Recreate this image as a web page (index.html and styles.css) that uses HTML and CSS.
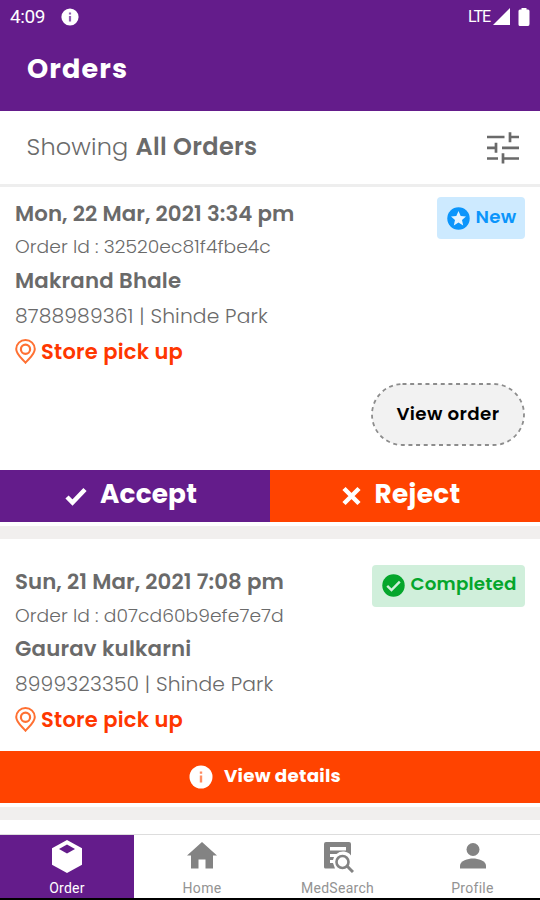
FILE: index.html
```html
<!DOCTYPE html>
<html lang="en">
<head>
<meta charset="utf-8">
<title>Orders</title>
<link rel="stylesheet" href="styles.css">
</head>
<body>
<header class="top">
  <div class="status">
    <span class="clock">4:09</span>
    <svg width="18" height="18" viewBox="0 0 18 18"><circle cx="9" cy="9" r="8.600" fill="#fff"/><path d="M9 4.500v2M9 8v5.500" stroke="#8f5fb3" stroke-width="2.200"/></svg>
    <span class="lte">LTE</span>
    <svg width="17" height="17" viewBox="0 0 17 17"><path d="M17 0v17H0z" fill="#fff"/></svg>
    <svg class="battery" width="12" height="18" viewBox="0 0 12 18"><path d="M3.500 0h5v1.500H10q1.500 0 1.500 1.500v13Q11.500 18 10 18H2Q.5 18 .5 16.500V3Q.5 1.500 2 1.500h1.500z" fill="#fff"/></svg>
  </div>
  <h1>Orders</h1>
</header>
<section class="filter">
  <span class="showing">Showing</span>
  <span class="all">All Orders</span>
  <svg class="tune" width="32" height="32" viewBox="0 0 32 32" fill="none" stroke="#6a6a6a" stroke-width="2.700"><path d="M0 5h17.500M23.500 5H32M23 .3v10M0 15.800h9M15 15.800h17M9 10.800v10M0 26.500h11M17 26.500h15M16 21.300v10.200"/></svg>
</section>
<main>
  <article class="card first">
    <div class="info">
      <div class="lines">
        <div class="date">Mon, 22 Mar, 2021 3:34 pm</div>
        <div class="oid">Order Id : 32520ec81f4fbe4c</div>
        <div class="name">Makrand Bhale</div>
        <div class="phone">8788989361 | Shinde Park</div>
        <div class="store"><svg width="21" height="25" viewBox="0 0 21 25" fill="none" stroke="#ff7032" stroke-width="2"><path d="M10.500 23.700C7 19.500 1.200 15.400 1.200 10a9.300 9 0 0 1 18.600 0c0 5.400-5.800 9.500-9.300 13.700z"/><circle cx="10.500" cy="10.300" r="4.600" stroke-width="2.200"/></svg><span>Store pick up</span></div>
      </div>
      <div class="badge new"><svg width="23" height="23" viewBox="0 0 23 23"><circle cx="11.500" cy="11.500" r="11.200" fill="#0b95fb"/><path d="M11.500 4l2.200 5 5.300.5-4 3.600 1.200 5.300-4.700-2.800-4.700 2.800L8 13.100 4 9.500 9.300 9z" fill="#e2f3ff"/></svg><span>New</span></div>
    </div>
    <div class="view-row"><button class="view"><svg class="dash" width="154" height="63" viewBox="0 0 154 63"><rect x="1" y="1" width="152" height="61" rx="30.500" fill="#f2f2f2" stroke="#8d8d8d" stroke-width="1.800" stroke-dasharray="4 3.650"/></svg><span class="view-label">View order</span></button></div>
    <div class="actions">
      <button class="accept"><svg width="22" height="20" viewBox="0 0 22 20"><path d="M2 11l5.500 5.500L20 3.500" fill="none" stroke="#fff" stroke-width="4.500"/></svg><span>Accept</span></button>
      <button class="reject"><svg width="19" height="20" viewBox="0 0 19 20"><path d="M2 2.500l15 15M17 2.500l-15 15" stroke="#fff" stroke-width="4.500"/></svg><span>Reject</span></button>
    </div>
  </article>
  <div class="gap"></div>
  <article class="card second">
    <div class="info">
      <div class="lines">
        <div class="date">Sun, 21 Mar, 2021 7:08 pm</div>
        <div class="oid">Order Id : d07cd60b9efe7e7d</div>
        <div class="name">Gaurav kulkarni</div>
        <div class="phone">8999323350 | Shinde Park</div>
        <div class="store"><svg width="21" height="25" viewBox="0 0 21 25" fill="none" stroke="#ff7032" stroke-width="2"><path d="M10.500 23.700C7 19.500 1.200 15.400 1.200 10a9.300 9 0 0 1 18.600 0c0 5.400-5.800 9.500-9.300 13.700z"/><circle cx="10.500" cy="10.300" r="4.600" stroke-width="2.200"/></svg><span>Store pick up</span></div>
      </div>
      <div class="badge done"><svg width="23" height="23" viewBox="0 0 23 23"><circle cx="11.500" cy="11.500" r="11.200" fill="#05a62c"/><path d="M5.200 11.800l4.300 4.300 8.300-8.500" fill="none" stroke="#d0efdb" stroke-width="2.400"/></svg><span>Completed</span></div>
    </div>
    <button class="details"><svg width="24" height="24" viewBox="0 0 24 24"><circle cx="12" cy="12" r="11.500" fill="#fff"/><path d="M12 6.500v2.300M12 10.500v7" stroke="#ff8d63" stroke-width="2.400"/></svg><span>View details</span></button>
  </article>
  <div class="gap"></div>
</main>
<nav>
  <a class="on"><svg width="30" height="33" viewBox="0 0 30 33"><path d="M15 0l15 8.300v16.400L15 33 0 24.700V8.300z" fill="#fff"/><path d="M15 4.500l8 4.500-8 4.500L7 9z" fill="#641c8b"/></svg><span>Order</span></a>
  <a><svg width="30" height="33" viewBox="0 0 30 33"><path d="M15 2L30 15.500h-4V28.500h-7.500v-9h-7v9H4v-13H0z" fill="#838383"/></svg><span>Home</span></a>
  <a><svg width="32" height="33" viewBox="0 0 32 33"><path fill="#838383" fill-rule="evenodd" d="M4 2h23a2 2 0 0 1 2 2v11.500a10 10 0 0 0-14.500-1.500H8v3h4l-1 3H8v3h3l2 5.500H3.500A1.500 1.500 0 0 1 2 27V4a2 2 0 0 1 2-2zM8 7v3.500h16V7z"/><circle cx="20.500" cy="22" r="6" fill="none" stroke="#838383" stroke-width="2.600"/><path d="M25 26l6 6" stroke="#838383" stroke-width="3"/></svg><span>MedSearch</span></a>
  <a><svg width="26" height="33" viewBox="0 0 26 33" fill="#838383"><circle cx="13" cy="9.500" r="6.500"/><path d="M0 28.500V25.500C0 21 8 18.500 13 18.500s13 2.500 13 7v3z"/></svg><span>Profile</span></a>
</nav>
</body>
</html>
```
FILE: styles.css
```css
*{box-sizing:border-box}
body{margin:0;width:540px;height:900px;overflow:hidden;background:#fff;font-family:Poppins,Inter,sans-serif;color:#6a6a6a;display:flex;flex-direction:column}
svg{display:block;flex:none}
button{border:0;padding:0;margin:0;font:inherit;color:inherit;background:none}
span,.lines div{white-space:nowrap}

.top{height:111px;background:#641c8b;color:#fff;flex:none}
.status{height:33px;display:flex;align-items:center;padding:0 10px;font-family:Roboto,sans-serif}
.clock{font-size:19px;width:51px;letter-spacing:-.41px}
.lte{font-size:16px;margin-left:auto;margin-right:3px;letter-spacing:-1.040px}
.battery{margin-left:8px}
h1{margin:0;padding-left:27px;font-size:27px;font-weight:700;line-height:71px;letter-spacing:1.150px}

.filter{height:76px;flex:none;display:flex;align-items:center;padding:0 21px 0 26.500px;border-bottom:3px solid #eee;font-size:24px;line-height:34px}
.filter>span{padding-bottom:1px}
.showing{font-weight:300;width:109px;letter-spacing:.17px}
.all{font-weight:600;letter-spacing:.34px}
.tune{margin-left:auto}

main{flex:1;min-height:0}
.first{height:334.500px;display:flex;flex-direction:column}
.info{display:flex;justify-content:space-between;align-items:flex-start;padding:9px 15.500px 0 15px}
.lines{display:grid;grid-template-rows:34px 34px 33px 37px 34px;align-items:center;line-height:30px}
.date,.name{font-size:21.300px;font-weight:600;letter-spacing:.08px}
.name{letter-spacing:.18px}
.first .date{padding-top:1px}
.oid{font-size:18.700px;font-weight:300;letter-spacing:.05px}
.phone{font-size:20.300px;font-weight:300;letter-spacing:.13px}
.store{display:flex;align-items:center;gap:5px;color:#ff3700;font-size:21px;font-weight:600;letter-spacing:.24px}
.first .store span{padding-top:1px}

.badge{height:42px;border-radius:4px;display:flex;align-items:center;font-size:18.300px;line-height:28px;font-weight:600;padding-left:10px;gap:6px}
.badge span{padding-bottom:3px}
.new{width:88px;margin-top:1px;background:#cdeaff;color:#0b95fb;letter-spacing:.28px}
.done{width:153px;background:#d0efdb;color:#05a62c;letter-spacing:.18px}

.view-row{display:flex;justify-content:flex-end;padding:15px 15px 0}
.view{width:154px;height:63px;display:grid;place-items:center}
.dash,.view-label{grid-area:1/1}
.view-label{font-size:18.300px;font-weight:600;color:#000;padding-bottom:3px;letter-spacing:.38px}

.actions{display:grid;grid-template-columns:269.500px 270.500px;height:52px;margin-top:auto}
.actions button{display:flex;align-items:center;color:#fff;font-size:26.300px;line-height:36px;font-weight:700}
.actions span{padding-bottom:4px}
.actions .accept{background:#641c8b;padding-left:65px;gap:13px;letter-spacing:.18px}
.actions .reject{background:#ff4300;padding-left:72px;gap:14px;letter-spacing:.35px}

.gap{height:17px;border-top:4px solid #fff;background:#f1efee}

.second .info{padding-top:26px}
.details{margin-top:14px;height:52px;width:100%;display:flex;align-items:center;padding-left:189px;gap:11px;background:#ff4300;color:#fff;font-size:18.300px;font-weight:700;letter-spacing:.23px}
.details span{padding-bottom:3px}

nav{height:66px;flex:none;display:grid;grid-template-columns:134px 136px 135px 135px;border-top:1px solid #ddd;border-bottom:2px solid #000}
nav a{display:flex;flex-direction:column;align-items:center;padding-top:5px;font:14px/18px Roboto,sans-serif;color:#939393;letter-spacing:.28px}
nav a span{margin-top:6px}
nav .on{background:#641c8b;color:#fff}
```
